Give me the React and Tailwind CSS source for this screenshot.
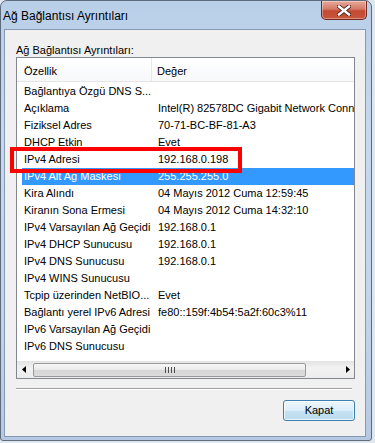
import React from 'react';

const rows = [
  ['Bağlantıya Özgü DNS S...', ''],
  ['Açıklama', 'Intel(R) 82578DC Gigabit Network Connection'],
  ['Fiziksel Adres', '70-71-BC-BF-81-A3'],
  ['DHCP Etkin', 'Evet'],
  ['IPv4 Adresi', '192.168.0.198'],
  ['IPv4 Alt Ağ Maskesi', '255.255.255.0'],
  ['Kira Alındı', '04 Mayıs 2012 Cuma 12:59:45'],
  ['Kiranın Sona Ermesi', '04 Mayıs 2012 Cuma 14:32:10'],
  ['IPv4 Varsayılan Ağ Geçidi', '192.168.0.1'],
  ['IPv4 DHCP Sunucusu', '192.168.0.1'],
  ['IPv4 DNS Sunucusu', '192.168.0.1'],
  ['IPv4 WINS Sunucusu', ''],
  ['Tcpip üzerinden NetBIO...', 'Evet'],
  ['Bağlantı yerel IPv6 Adresi', 'fe80::159f:4b54:5a2f:60c3%11'],
  ['IPv6 Varsayılan Ağ Geçidi', ''],
  ['IPv6 DNS Sunucusu', ''],
];

const SELECTED = 5;

const CloseButton = () => (
  <div className="w-[46px] h-[19px] rounded-b-[5px] border border-t-0 border-[#6d2a20] bg-[linear-gradient(180deg,#e9a99b_0%,#d47a68_45%,#c24a32_55%,#c8553a_100%)] flex items-center justify-center shadow-[inset_0_0_0_1px_rgba(255,255,255,0.35)]">
    <svg width="14" height="11" viewBox="0 0 14 11">
      <path d="M2 1.5 L12 9.5 M12 1.5 L2 9.5" stroke="#4a2018" strokeWidth="4.2" strokeLinecap="square" />
      <path d="M2 1.5 L12 9.5 M12 1.5 L2 9.5" stroke="#ffffff" strokeWidth="2.4" strokeLinecap="square" />
    </svg>
  </div>
);

const Arrow = ({ dir }) => (
  <div className="w-[17px] h-[17px] flex items-center justify-center">
    <svg width="4" height="7" viewBox="0 0 4 7">
      {dir === 'left' ? <path d="M4 0 L0 3.5 L4 7 Z" fill="#000" /> : <path d="M0 0 L4 3.5 L0 7 Z" fill="#000" />}
    </svg>
  </div>
);

const HScrollbar = () => (
  <div className="h-[17px] flex items-center bg-[linear-gradient(180deg,#e3e3e3,#f2f2f2_40%,#ececec)]">
    <Arrow dir="left" />
    <div className="flex-1 h-full flex items-center pl-[3px] pr-[35px]">
      <div className="w-[273px] h-[14px] rounded-[2px] border border-[#9a9a9a] bg-[linear-gradient(180deg,#f6f6f6,#e9e9e9_50%,#d6d6d6_51%,#dcdcdc)] flex items-center justify-center gap-[2px]">
        <span className="w-[1px] h-[6px] bg-[#4d4d4d]" />
        <span className="w-[1px] h-[6px] bg-[#4d4d4d]" />
        <span className="w-[1px] h-[6px] bg-[#4d4d4d]" />
        <span className="w-[1px] h-[6px] bg-[#4d4d4d]" />
      </div>
    </div>
    <Arrow dir="right" />
  </div>
);

export default function App() {
  return (
    <div className="relative w-[375px] h-[443px] bg-[#dfe6ee] overflow-hidden font-['Liberation_Sans',Arial,sans-serif] text-black">
      <div className="w-[372px] h-[441px] rounded-t-[7px] rounded-b-[3px] border border-[#5d6b7d] bg-[linear-gradient(180deg,#b9cfe8_0%,#c6d8ed_30%,#c3d5eb_70%,#b5c9e2_100%)] flex flex-col">
        <div className="h-[28px] flex items-start justify-between pl-[2px] pr-[4px]">
          <div className="text-[12px] leading-[28px] pt-[1px] text-black">Ağ Bağlantısı Ayrıntıları</div>
          <CloseButton />
        </div>
        <div className="ml-[3px] w-[362px] h-[408px] border border-[#8799b0] bg-[#f0f0f0] flex flex-col pl-[11px]">
          <div className="mt-[13px] h-[14px] leading-[14px] text-[11px]">Ağ Bağlantısı Ayrıntıları:</div>
          <div className="w-[339px] h-[322px] border border-[#828790] bg-white flex flex-col overflow-hidden">
            <div className="h-[24px] shrink-0 flex border-b border-[#e5e5e5] bg-[linear-gradient(180deg,#ffffff,#f7f8fa)] text-[11px]">
              <div className="w-[135px] pl-[7px] pt-[3px] leading-[20px] border-r border-[#e3e8ee]">Özellik</div>
              <div className="flex-1 pl-[5px] pt-[3px] leading-[20px]">Değer</div>
            </div>
            <div className="h-[272px] mt-[1px] shrink-0 pl-[5px]">
              {rows.map(([name, value], i) => (
                <div
                  key={i}
                  className={
                    'h-[17px] flex text-[11px] leading-[17px] whitespace-nowrap ' +
                    (i === SELECTED ? 'bg-[#3399ff] text-white' : '')
                  }
                >
                  <div className="w-[136px] shrink-0 pl-[2px]">{name}</div>
                  <div className="shrink-0">{value}</div>
                </div>
              ))}
            </div>
            <div className="flex-1" />
            <HScrollbar />
          </div>
          <div className="mt-[9px] w-[336px] border-t border-[#a0a0a0] border-b border-b-white" />
          <div className="mt-[10px] w-[339px] flex justify-end">
            <button className="w-[72px] h-[21px] rounded-[3px] border border-[#3c7fb1] bg-[linear-gradient(180deg,#eef6fc,#dcedf9_50%,#c5e1f3_51%,#bcdcf0)] shadow-[inset_0_0_0_1px_rgba(255,255,255,0.7)] text-[11px] leading-[19px] text-black">
              Kapat
            </button>
          </div>
        </div>
      </div>
      <div className="absolute left-[10px] top-[147px] w-[232px] h-[26px] border-[4px] border-[#ff0000]" />
    </div>
  );
}
